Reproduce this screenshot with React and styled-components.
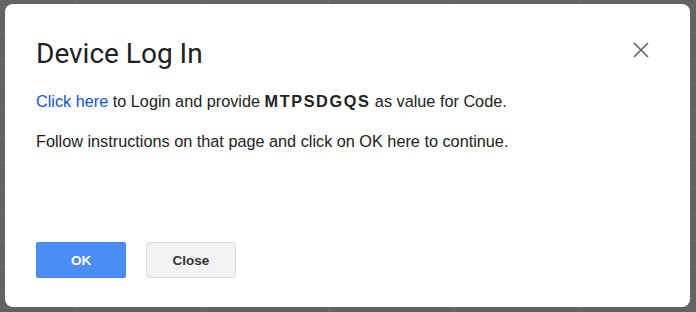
import React from "react";
import styled, { createGlobalStyle } from "styled-components";

const Global = createGlobalStyle`
  html, body { margin: 0; padding: 0; }
  body { width: 696px; height: 312px; overflow: hidden; }
`;

const Backdrop = styled.div`
  width: 696px;
  height: 312px;
  box-sizing: border-box;
  padding: 4px 6px 5px 5px;
  display: flex;
  background-color: #636363;
  background-image:
    repeating-linear-gradient(to bottom, transparent 0 25px, #6d6d6d 25px 26px),
    repeating-linear-gradient(to right, transparent 0 125px, #6d6d6d 125px 126px);
  background-position: 0 7px, -49px 0;
`;

const Dialog = styled.div`
  flex: 1;
  background: #fff;
  border-radius: 8px;
  box-sizing: border-box;
  padding: 32px 37px 29px 31px;
  display: flex;
  flex-direction: column;
`;

const Header = styled.div`
  display: flex;
  justify-content: space-between;
  align-items: flex-start;
`;

const Title = styled.h1`
  margin: 0;
  font-family: Roboto, "Open Sans", sans-serif;
  font-weight: 400;
  font-size: 28px;
  line-height: 36px;
  color: #202124;
`;

const CloseIcon = styled.button`
  margin-top: 2px;
  width: 24px;
  height: 24px;
  padding: 0;
  border: none;
  background: transparent;
  display: flex;
  align-items: center;
  justify-content: center;
  cursor: pointer;
`;

const Body = styled.div`
  margin-top: 19px;
  display: flex;
  flex-direction: column;
  gap: 20px;
`;

const Para = styled.p`
  margin: 0;
  font-family: "Liberation Sans", Arial, sans-serif;
  font-size: 16.25px;
  line-height: 20px;
  color: #222;
`;

const Link = styled.a`
  color: #1155cc;
  text-decoration: none;
`;

const Code = styled.b`
  font-weight: 700;
  letter-spacing: 1.6px;
`;

const Footer = styled.div`
  margin-top: auto;
  display: flex;
  gap: 20px;
`;

const Button = styled.button`
  width: 90px;
  height: 36px;
  box-sizing: border-box;
  border-radius: 2px;
  font-family: "Liberation Sans", Arial, sans-serif;
  font-weight: 700;
  font-size: 13.5px;
  cursor: pointer;
  border: 1px solid ${(p) => (p.$primary ? "#4887f2" : "#dcdcdc")};
  background: ${(p) => (p.$primary ? "#4c8cf5" : "#f3f3f3")};
  color: ${(p) => (p.$primary ? "#fff" : "#333")};
`;

export default function App() {
  return (
    <>
      <Global />
      <Backdrop>
        <Dialog>
          <Header>
            <Title>Device Log In</Title>
            <CloseIcon aria-label="Close">
              <svg width="16" height="16" viewBox="0 0 16 16">
                <path d="M1 1L15 15M15 1L1 15" stroke="#5f6368" strokeWidth="1.6" fill="none" />
              </svg>
            </CloseIcon>
          </Header>
          <Body>
            <Para>
              <Link href="#">Click here</Link> to Login and provide <Code>MTPSDGQS</Code> as value for Code.
            </Para>
            <Para>Follow instructions on that page and click on OK here to continue.</Para>
          </Body>
          <Footer>
            <Button $primary>OK</Button>
            <Button>Close</Button>
          </Footer>
        </Dialog>
      </Backdrop>
    </>
  );
}
